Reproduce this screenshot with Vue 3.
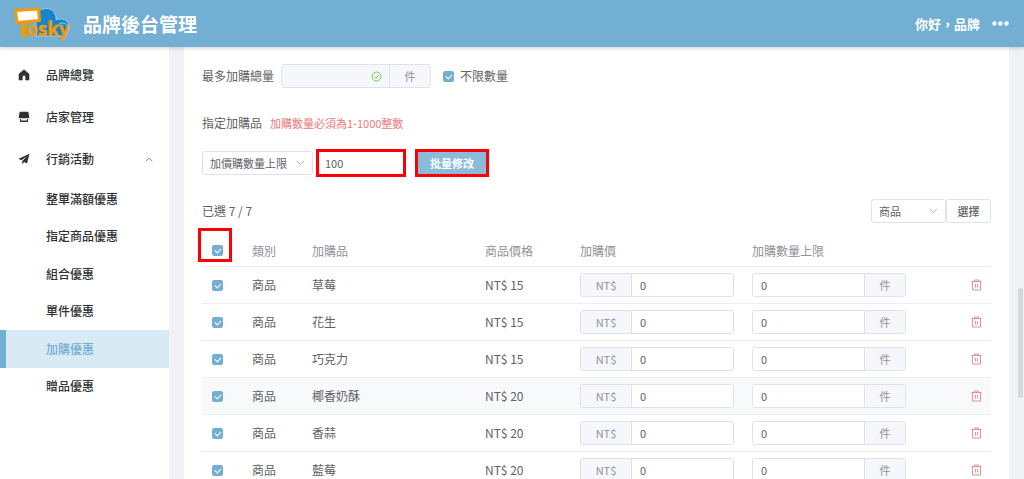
<script setup>
import { ref } from 'vue'

const limit = ref('100')
const unlimited = ref(true)
const allChecked = ref(true)
const promos = ['整單滿額優惠', '指定商品優惠', '組合優惠', '單件優惠', '加購優惠', '贈品優惠']
const active = '加購優惠'
const rows = ref([
  { name: '草莓', price: 15 },
  { name: '花生', price: 15 },
  { name: '巧克力', price: 15 },
  { name: '椰香奶酥', price: 20, hover: true },
  { name: '香蒜', price: 20 },
  { name: '藍莓', price: 20 },
].map((r) => ({ ...r, checked: true, addPrice: '0', max: '0' })))
</script>

<template>
  <div class="app" lang="zh-Hant">
    <header class="topbar">
      <svg class="logo" width="60" height="36" viewBox="0 0 60 36" role="img" aria-label="Tosky">
        <path d="M24 30V9C27 1 40 0 43 8c1 2 1.500 4 1 6 5-3 14 0 13 8 0 3-2 6-4 8z" fill="#1785cb" stroke="#9fcdea" stroke-width="1" />
        <path d="M46 20c1-4 8-4 9 0" fill="none" stroke="#9fcdea" stroke-width="1" />
        <path d="M11.500 18v11" stroke="#f29a0c" stroke-width="5" stroke-linecap="round" />
        <text x="14" y="30" class="logo-text">osky</text>
        <path d="M3.500 4.500L26.500 3L27.500 14.500L5 16.500z" fill="#fff" stroke="#f29a0c" stroke-width="3" stroke-linejoin="round" />
      </svg>
      <h1>品牌後台管理</h1>
      <span class="hello">你好，品牌</span>
      <button class="more" type="button" aria-label="更多">
        <svg width="17" height="5" viewBox="0 0 17 5" fill="#fff"><circle cx="2.500" cy="2.500" r="2.200" /><circle cx="8.500" cy="2.500" r="2.200" /><circle cx="14.500" cy="2.500" r="2.200" /></svg>
      </button>
    </header>

    <div class="body">
      <nav class="sidebar">
        <a href="#" class="item">
          <svg width="12" height="12" viewBox="0 0 12 12"><path d="M6 .8L1 5v6h3.300V8a1.700 1.700 0 0 1 3.400 0v3H11V5z" fill="#303133" stroke="#303133" stroke-width=".6" stroke-linejoin="round" /></svg>
          <span>品牌總覽</span>
        </a>
        <a href="#" class="item">
          <svg width="12" height="12" viewBox="0 0 12 12" fill="#303133"><path d="M1.700.8h8.600L11.300 6a1 1 0 0 1-.8 1.200h-9A1 1 0 0 1 .7 6z" /><path d="M2 8h1v1.500h6V8h1v2.300a.8.8 0 0 1-.8.8H2.800a.8.8 0 0 1-.8-.8z" /></svg>
          <span>店家管理</span>
        </a>
        <a href="#" class="item">
          <svg width="12" height="12" viewBox="0 0 12 12" fill="#303133"><path d="M11.500.7L.5 5.800l2.700 1.400L9 3.200 4.300 8v3.300l1.900-2.400 2.800 1.600z" /></svg>
          <span>行銷活動</span>
          <svg class="arrow" width="8" height="5" viewBox="0 0 8 5"><path d="M.7 4.300L4 1l3.300 3.300" fill="none" stroke="#909399" /></svg>
        </a>
        <div class="sub">
          <a v-for="p in promos" :key="p" href="#" :class="{ active: p === active }">{{ p }}</a>
        </div>
      </nav>

      <main class="content">
        <section class="card">
          <div class="line total">
            <label for="total">最多加購總量</label>
            <div class="group off">
              <input id="total" type="text" disabled>
              <svg class="ok" width="11" height="11" viewBox="0 0 11 11" fill="none" stroke="#67c23a" stroke-width=".9"><circle cx="5.500" cy="5.500" r="4.500" /><path d="M3.200 5.600l1.700 1.600 3-3.200" /></svg>
              <span class="unit">件</span>
            </div>
            <label class="check"><input v-model="unlimited" type="checkbox">不限數量</label>
          </div>

          <div class="line heading">
            <span>指定加購品</span>
            <span class="error">加購數量必須為1-1000整數</span>
          </div>

          <div class="line batch">
            <div class="select field">
              <select aria-label="批量欄位"><option>加價購數量上限</option></select>
              <svg width="9" height="6" viewBox="0 0 9 6"><path d="M.8.800L4.500 4.600 8.200.8" fill="none" stroke="#b4b8bf" /></svg>
            </div>
            <div class="marked value"><input v-model="limit" type="text" aria-label="數量上限"></div>
            <div class="marked apply"><button type="button">批量修改</button></div>
          </div>

          <div class="line picked">
            <span>已選 7 / 7</span>
            <div class="select kind">
              <select aria-label="類別"><option>商品</option></select>
              <svg width="9" height="6" viewBox="0 0 9 6"><path d="M.8.800L4.500 4.600 8.200.8" fill="none" stroke="#b4b8bf" /></svg>
            </div>
            <button class="choose" type="button">選擇</button>
          </div>

          <table>
            <colgroup>
              <col class="c-check"><col class="c-type"><col><col class="c-price"><col class="c-input"><col class="c-input"><col class="c-del">
            </colgroup>
            <thead>
              <tr>
                <th class="all"><input v-model="allChecked" type="checkbox" aria-label="全選"></th>
                <th>類別</th><th>加購品</th><th>商品價格</th><th>加購價</th><th>加購數量上限</th><th></th>
              </tr>
            </thead>
            <tbody>
              <tr v-for="r in rows" :key="r.name" :class="{ hover: r.hover }">
                <td><input v-model="r.checked" type="checkbox" :aria-label="r.name"></td>
                <td>商品</td>
                <td>{{ r.name }}</td>
                <td>NT$ {{ r.price }}</td>
                <td>
                  <div class="group"><span class="unit pre">NT$</span><input v-model="r.addPrice" type="text" :aria-label="r.name + '加購價'"></div>
                </td>
                <td>
                  <div class="group"><input v-model="r.max" type="text" :aria-label="r.name + '加購數量上限'"><span class="unit">件</span></div>
                </td>
                <td class="del">
                  <button type="button" :aria-label="'刪除' + r.name">
                    <svg width="11" height="12" viewBox="0 0 11 12" fill="none" stroke="#e88f90"><path d="M.5 2.500h10M3.500 2.500v-1.500h4v1.500M1.500 2.500v8.500h8v-8.500M4.500 5v3.500M6.500 5v3.500" /></svg>
                  </button>
                </td>
              </tr>
            </tbody>
          </table>
        </section>
        <div class="thumb"></div>
      </main>
    </div>
  </div>
</template>

<style>
body { margin: 0; overflow: hidden; }
</style>

<style scoped>
.app { height: 100vh; display: flex; flex-direction: column; overflow: hidden; background: #fff; color: #606266; font: 12px/18px "Noto Sans CJK TC", "Noto Sans", sans-serif; }
.app *, .app *::after { box-sizing: border-box; }
button, input, select { font: inherit; color: inherit; margin: 0; outline: 0; }
a { text-decoration: none; color: inherit; }
svg { display: block; flex: none; }

.topbar { position: relative; z-index: 2; flex: none; display: flex; align-items: center; height: 47px; padding: 0 15px 0 12px; background: #73aed3; color: #fff; box-shadow: 0 1px 4px rgba(0, 21, 41, .2); }
.logo-text { font: 700 19px "Noto Sans CJK TC", sans-serif; fill: #f29a0c; stroke: #f29a0c; stroke-width: .6px; }
h1 { flex: 1; margin: 0 0 0 11px; font-size: 19px; line-height: 28px; font-weight: 700; }
.hello { font-size: 13px; font-weight: 700; }
.more { display: flex; margin-left: 12px; padding: 0; border: 0; background: none; }

.body { flex: 1; min-height: 0; display: flex; }
.sidebar { flex: none; width: 169px; padding-top: 7px; color: #303133; font-weight: 500; }
.item { display: flex; align-items: center; gap: 16px; height: 42px; padding: 0 16px 0 18px; }
.arrow { margin-left: auto; }
.sub { display: grid; grid-auto-rows: 1fr; height: 225px; }
.sub a { display: flex; align-items: center; padding-left: 40px; border-left: 6px solid transparent; }
.sub .active { background: #d8eaf4; border-color: #73aed3; color: #73aed3; }

.content { position: relative; flex: 1; min-width: 0; overflow: hidden; padding: 0 15px; background: #f0f2f5; }
.card { min-height: 100%; padding: 17px 18px 0; background: #fff; }
.thumb { position: absolute; right: 1px; top: 241px; width: 5px; height: 110px; border-radius: 3px; background: #d5d7db; }

.line { display: flex; align-items: center; height: 24px; }
.total .group { width: 150px; margin: 0 12px 0 7px; }
.group { position: relative; display: flex; height: 24px; border: 1px solid #dfe2e8; border-radius: 3px; background: #fff; overflow: hidden; font-size: 11px; }
.group input { flex: 1; min-width: 0; padding: 0 8px; border: 0; background: none; }
.group.off { background: #f5f7fa; }
.ok { align-self: center; margin-right: 7px; }
.unit { flex: none; display: flex; align-items: center; justify-content: center; width: 41px; border-left: 1px solid #dfe2e8; background: #f5f7fa; color: #909399; }
.unit.pre { width: 51px; border-left: 0; border-right: 1px solid #dfe2e8; }
.check { display: flex; align-items: center; gap: 6px; }
input[type="checkbox"] { appearance: none; position: relative; display: block; flex: none; width: 11px; height: 11px; border: 1px solid #dcdfe6; border-radius: 2px; background: #fff; }
input[type="checkbox"]:checked { border-color: #73aed3; background: #73aed3; }
input[type="checkbox"]:checked::after { content: ""; position: absolute; left: 3px; top: 1px; width: 4px; height: 6px; border: solid #fff; border-width: 0 1px 1px 0; transform: rotate(45deg); }

.heading { margin-top: 23px; gap: 8px; }
.error { font-size: 11px; color: #f07878; }
.batch { margin-top: 16px; font-size: 11px; }
.select { position: relative; height: 24px; }
.select select { appearance: none; width: 100%; height: 100%; padding: 0 7px; border: 1px solid #dfe2e8; border-radius: 3px; background: #fff; font-size: 11px; }
.select svg { position: absolute; right: 8px; top: 9px; pointer-events: none; }
.field { width: 111px; }
.marked { position: relative; }
.marked::after { content: ""; position: absolute; inset: -3px; border: 3px solid #fb0007; pointer-events: none; }
.value { width: 84px; height: 22px; margin-left: 6px; }
.value input { width: 100%; height: 100%; padding: 0 6px; border: 0; background: #fff; }
.apply { height: 22px; margin-left: 15px; }
.apply button { width: 68px; height: 100%; padding: 0; border: 0; background: #8abbdb; color: #fff; font-weight: 700; }
.picked { margin-top: 24px; }
.kind { width: 75px; margin-left: auto; }
.choose { width: 45px; height: 24px; padding: 0; border: 1px solid #dfe2e8; border-radius: 3px; background: #fff; font-size: 11px; font-weight: 500; }

table { width: 100%; margin-top: 12px; table-layout: fixed; border-collapse: separate; border-spacing: 0; }
.c-check { width: 41px; }
.c-type { width: 60px; }
.c-price { width: 95px; }
.c-input { width: 172px; }
.c-del { width: 76px; }
th, td { height: 37px; padding: 0 9px; border-bottom: 1px solid #ebeef5; text-align: left; vertical-align: middle; white-space: nowrap; }
th:first-child, td:first-child { padding-left: 10px; }
th { height: 32px; color: #909399; font-weight: 400; }
.all { position: relative; }
.all::after { content: ""; position: absolute; left: -4px; top: -7px; width: 34px; height: 34px; border: 3px solid #fb0007; pointer-events: none; }
td .group { width: 154px; }
.hover td { background: #f8f9fb; }
.del button { display: block; margin-left: auto; padding: 0; border: 0; background: none; }
</style>
